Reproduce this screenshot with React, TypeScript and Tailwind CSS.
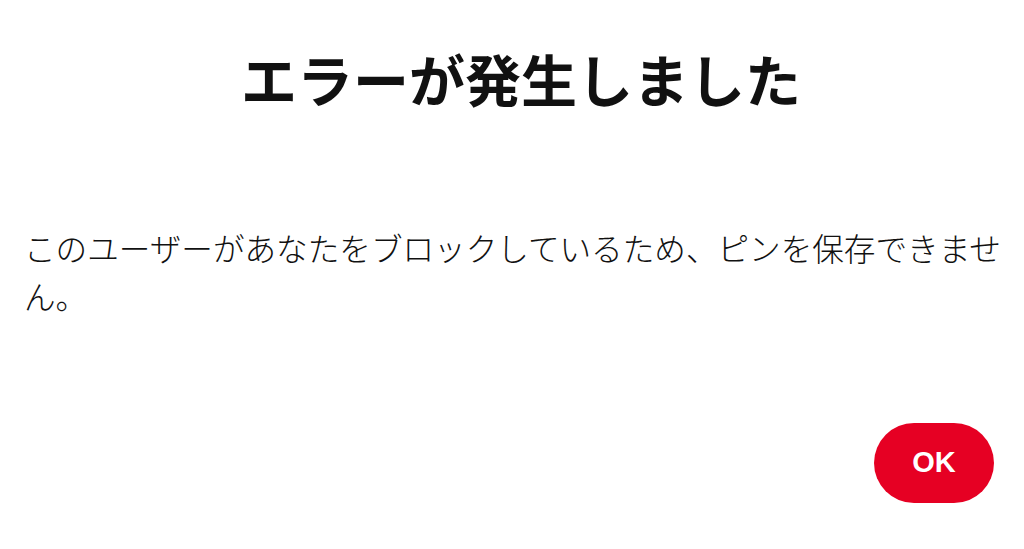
export default function App() {
  return (
    <main
      className="flex h-[549px] w-full flex-col bg-white text-[#111]"
      style={{ fontFamily: '"Noto Sans CJK JP", "Noto Sans", sans-serif' }}
    >
      <h1 className="pl-[18px] pt-[50px] text-center text-[56px] font-bold leading-[56px]">
        エラーが発生しました
      </h1>

      <p className="mt-[117px] pl-6 pr-4 text-[31.6px] font-light leading-[48px]">
        このユーザーがあなたをブロックしているため、ピンを保存できません。
      </p>

      <div className="mt-auto flex justify-end pb-[46px] pr-[30px]">
        <button
          type="button"
          className="flex h-[80px] w-[120px] items-center justify-center rounded-full bg-[#e60023] text-[29px] font-bold text-white"
          style={{ fontFamily: '"Liberation Sans", Arial, sans-serif' }}
        >
          OK
        </button>
      </div>
    </main>
  );
}
